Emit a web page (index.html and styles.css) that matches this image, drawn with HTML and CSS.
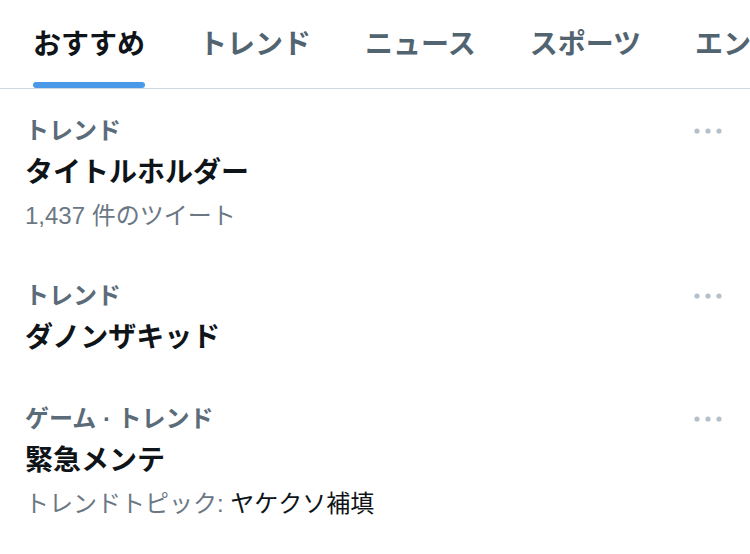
FILE: index.html
```html
<!DOCTYPE html>
<html lang="ja">
<head>
<meta charset="utf-8">
<link rel="stylesheet" href="styles.css">
</head>
<body>
<nav class="tabs">
  <div class="tab tab-first active"><span class="tab-label">おすすめ</span><span class="indicator"></span></div>
  <div class="tab"><span class="tab-label">トレンド</span><span class="indicator"></span></div>
  <div class="tab"><span class="tab-label">ニュース</span><span class="indicator"></span></div>
  <div class="tab"><span class="tab-label">スポーツ</span><span class="indicator"></span></div>
  <div class="tab"><span class="tab-label">エンタメ</span><span class="indicator"></span></div>
</nav>
<main class="trends">
  <section class="trend">
    <div class="trend-body">
      <div class="trend-context">トレンド</div>
      <div class="trend-title">タイトルホルダー</div>
      <div class="trend-meta">1,437 件のツイート</div>
    </div>
    <div class="more"><svg width="28" height="6" viewBox="0 0 28 6"><circle cx="3" cy="3" r="2.6"/><circle cx="14" cy="3" r="2.6"/><circle cx="25" cy="3" r="2.6"/></svg></div>
  </section>
  <section class="trend">
    <div class="trend-body">
      <div class="trend-context">トレンド</div>
      <div class="trend-title">ダノンザキッド</div>
    </div>
    <div class="more"><svg width="28" height="6" viewBox="0 0 28 6"><circle cx="3" cy="3" r="2.6"/><circle cx="14" cy="3" r="2.6"/><circle cx="25" cy="3" r="2.6"/></svg></div>
  </section>
  <section class="trend">
    <div class="trend-body">
      <div class="trend-context">ゲーム · トレンド</div>
      <div class="trend-title">緊急メンテ</div>
      <div class="trend-meta">トレンドトピック: <span class="topic">ヤケクソ補填</span></div>
    </div>
    <div class="more"><svg width="28" height="6" viewBox="0 0 28 6"><circle cx="3" cy="3" r="2.6"/><circle cx="14" cy="3" r="2.6"/><circle cx="25" cy="3" r="2.6"/></svg></div>
  </section>
</main>
</body>
</html>
```

FILE: styles.css
```css
html, body {
  margin: 0;
  padding: 0;
  background: #ffffff;
}
body {
  width: 750px;
  height: 554px;
  overflow: hidden;
  font-family: "Liberation Sans", "Noto Sans CJK JP", sans-serif;
  color: #0f1419;
}
.tabs {
  display: flex;
  height: 88px;
  border-bottom: 1px solid #cfd9de;
  white-space: nowrap;
  overflow: hidden;
}
.tab {
  display: flex;
  flex-direction: column;
  flex-shrink: 0;
  padding: 0 27px;
}
.tab-first {
  padding-left: 33px;
}
.tab-label {
  display: block;
  padding-top: 25px;
  line-height: 40px;
  font-size: 28px;
  font-weight: 700;
  color: #536471;
}
.active .tab-label {
  color: #0f1419;
}
.indicator {
  display: block;
  margin-top: auto;
  height: 6px;
  border-radius: 3px;
  background: transparent;
}
.active .indicator {
  background: #4a99e9;
}
.trend {
  display: flex;
  align-items: flex-start;
  padding: 26px 28px 21px 25px;
}
.trend-body {
  flex: 1;
}
.trend-context {
  font-size: 24px;
  line-height: 32px;
  font-weight: 700;
  color: #5b6b79;
}
.trend-title {
  margin-top: 8px;
  font-size: 28px;
  line-height: 36px;
  font-weight: 700;
  color: #0f1419;
}
.trend-meta {
  margin-top: 8px;
  font-size: 24px;
  line-height: 34px;
  color: #6b7884;
}
.topic {
  color: #0f1419;
}
.more {
  height: 32px;
  display: flex;
  align-items: center;
}
.more svg {
  display: block;
  fill: #b4c0ca;
}
```
